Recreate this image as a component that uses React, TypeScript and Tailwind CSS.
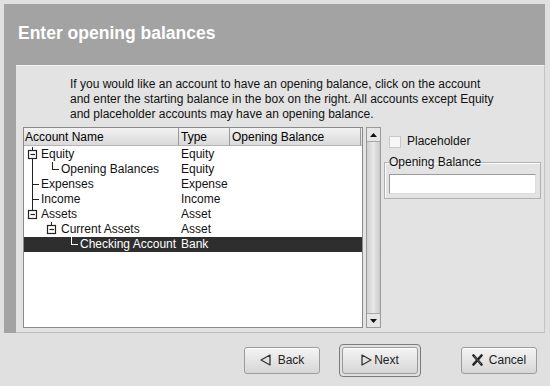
import React from "react";

type Glyph = "root-first" | "leaf-last-1" | "root-mid" | "root-last" | "branch-1" | "leaf-last-2";

type Row = {
  name: string;
  type: string;
  glyph: Glyph;
};

const rows: Row[] = [
  { name: "Equity", type: "Equity", glyph: "root-first" },
  { name: "Opening Balances", type: "Equity", glyph: "leaf-last-1" },
  { name: "Expenses", type: "Expense", glyph: "root-mid" },
  { name: "Income", type: "Income", glyph: "root-mid" },
  { name: "Assets", type: "Asset", glyph: "root-last" },
  { name: "Current Assets", type: "Asset", glyph: "branch-1" },
  { name: "Checking Account", type: "Bank", glyph: "leaf-last-2" },
];

// expander box with a minus, centred on cx
const Expander = ({ cx, color }: { cx: number; color: string }) => (
  <g>
    <rect x={cx - 4} y={3.5} width={8} height={8} fill="none" stroke={color} strokeWidth={1.2} />
    <line x1={cx - 2} y1={7.5} x2={cx + 2.5} y2={7.5} stroke={color} strokeWidth={1.2} />
  </g>
);

const TreeGlyph = ({ kind, selected }: { kind: Glyph; selected: boolean }) => {
  const c = selected ? "#ffffff" : "#222222";
  const width = kind === "leaf-last-2" ? 56 : kind === "leaf-last-1" || kind === "branch-1" ? 37 : 17;
  return (
    <svg width={width} height={15} className="shrink-0">
      {kind === "root-first" && (
        <>
          <line x1={8.5} y1={0} x2={8.5} y2={3.5} stroke={c} />
          <Expander cx={8.5} color={c} />
          <line x1={8.5} y1={11.5} x2={8.5} y2={15} stroke={c} />
        </>
      )}
      {kind === "leaf-last-1" && (
        <>
          <line x1={8.5} y1={0} x2={8.5} y2={15} stroke={c} />
          <line x1={28.5} y1={0} x2={28.5} y2={8} stroke={c} />
          <line x1={28.5} y1={7.5} x2={35} y2={7.5} stroke={c} />
        </>
      )}
      {kind === "root-mid" && (
        <>
          <line x1={8.5} y1={0} x2={8.5} y2={15} stroke={c} />
          <line x1={8.5} y1={7.5} x2={15} y2={7.5} stroke={c} />
        </>
      )}
      {kind === "root-last" && (
        <>
          <line x1={8.5} y1={0} x2={8.5} y2={3.5} stroke={c} />
          <Expander cx={8.5} color={c} />
        </>
      )}
      {kind === "branch-1" && (
        <>
          <line x1={27.5} y1={0} x2={27.5} y2={3.5} stroke={c} />
          <Expander cx={27.5} color={c} />
        </>
      )}
      {kind === "leaf-last-2" && (
        <>
          <line x1={47.5} y1={0} x2={47.5} y2={8} stroke={c} />
          <line x1={47.5} y1={7.5} x2={54} y2={7.5} stroke={c} />
        </>
      )}
    </svg>
  );
};

const BackIcon = () => (
  <svg width="11" height="12" viewBox="0 0 11 12">
    <path d="M1 6 L10 1 L10 11 Z" fill="#e4e4e4" stroke="#333" strokeWidth="1.3" strokeLinejoin="round" />
  </svg>
);

const NextIcon = () => (
  <svg width="11" height="12" viewBox="0 0 11 12">
    <path d="M10 6 L1 1 L1 11 Z" fill="#e4e4e4" stroke="#333" strokeWidth="1.3" strokeLinejoin="round" />
  </svg>
);

const CancelIcon = () => (
  <svg width="11" height="12" viewBox="0 0 11 12">
    <path d="M1.5 1.5 L9.5 10.5 M9.5 1.5 L1.5 10.5" stroke="#222" strokeWidth="2.6" strokeLinecap="round" />
    <path d="M2 2 L9 10" stroke="#777" strokeWidth="0.8" />
  </svg>
);

const Button = ({ icon, label, gap }: { icon: React.ReactNode; label: string; gap: string }) => (
  <div
    className={`flex items-center justify-center ${gap} w-[76px] h-[27px] rounded-[3px] border border-[#9c9c9c] bg-gradient-to-b from-[#f4f4f4] to-[#d6d6d6] text-[12px] text-[#222] shadow-[inset_0_1px_0_#ffffff]`}
  >
    {icon}
    <span>{label}</span>
  </div>
);

export default function App() {
  return (
    <div className="w-[550px] h-[386px] bg-[#e0e0e0] font-['Liberation_Sans',Arial,sans-serif] text-black overflow-hidden">
      {/* druid page frame */}
      <div className="pt-[4px] pl-[4px] pr-[5px]">
        <div className="bg-[#a3a3a3] flex flex-col h-[329px]">
          <div className="h-[61px] flex items-center pl-[14px]">
            <h1 className="text-[17.5px] font-bold text-white leading-none pb-[1px]">Enter opening balances</h1>
          </div>
          <div className="flex-1 flex">
            <div className="w-[12px]" />
            <div className="flex-1 bg-[#e3e3e3] border-t border-t-[#f0f0f0] border-r border-r-[#c4c4c4] border-b border-b-[#bcbcbc] flex flex-col">
              <p className="pl-[54px] pt-[11px] text-[12px] leading-[15px] text-[#111]">
                If you would like an account to have an opening balance, click on the account
                <br />
                and enter the starting balance in the box on the right. All accounts except Equity
                <br />
                and placeholder accounts may have an opening balance.
              </p>

              <div className="flex mt-[5px] pl-[7px]">
                {/* account tree */}
                <div className="w-[340px] h-[201px] border border-[#8a8a8a] bg-white flex flex-col text-[12px]">
                  <div className="flex h-[18px] leading-[18px] bg-gradient-to-b from-[#f2f2f2] to-[#dadada] border-b border-[#b4b4b4]">
                    <div className="w-[155px] pl-[1px] border-r border-[#9a9a9a]">Account Name</div>
                    <div className="w-[51px] pl-[2px] border-r border-[#9a9a9a]">Type</div>
                    <div className="flex-1 pl-[2px] border-r border-[#9a9a9a]">Opening Balance</div>
                    <div className="w-[1px]" />
                  </div>
                  <div className="flex flex-col pt-[1px]">
                    {rows.map((row) => {
                      const selected = row.name === "Checking Account";
                      return (
                        <div
                          key={row.name}
                          className={`flex h-[15px] leading-[15px] ${selected ? "bg-[#2e2e2e] text-white" : "text-[#111]"}`}
                        >
                          <div className="w-[155px] flex items-center">
                            <TreeGlyph kind={row.glyph} selected={selected} />
                            <span className="whitespace-nowrap">{row.name}</span>
                          </div>
                          <div className="w-[51px] pl-[2px]">{row.type}</div>
                          <div className="flex-1" />
                        </div>
                      );
                    })}
                  </div>
                </div>

                {/* scrollbar */}
                <div className="ml-[3px] w-[15px] h-[201px] border border-[#9a9a9a] bg-gradient-to-r from-[#cfcfcf] via-[#e9e9e9] to-[#c8c8c8] flex flex-col justify-between">
                  <div className="h-[14px] flex items-center justify-center bg-[#e6e6e6] border-b border-[#a8a8a8]">
                    <svg width="7" height="4" viewBox="0 0 7 4">
                      <path d="M0 4 L3.5 0 L7 4 Z" fill="#111" />
                    </svg>
                  </div>
                  <div className="h-[14px] flex items-center justify-center bg-[#e6e6e6] border-t border-[#a8a8a8]">
                    <svg width="7" height="4" viewBox="0 0 7 4">
                      <path d="M0 0 L3.5 4 L7 0 Z" fill="#111" />
                    </svg>
                  </div>
                </div>

                {/* right-hand options */}
                <div className="ml-[3px] w-[157px] flex flex-col text-[12px] text-[#111]">
                  <div className="flex items-center mt-[8px] pl-[5px] h-[13px]">
                    <div className="w-[12px] h-[12px] bg-[#f7f7f7] border border-[#c8c8c8]" />
                    <span className="ml-[6px] leading-[15px]">Placeholder</span>
                  </div>
                  <fieldset className="mt-[7px] border border-[#b0b0b0] px-[4px] pb-[4px] shadow-[inset_1px_1px_0_#ffffff]">
                    <legend className="leading-[15px]">Opening Balance</legend>
                    <div className="mt-[4px] h-[20px] bg-white border border-[#9a9a9a] border-b-[#dcdcdc] border-r-[#dcdcdc]" />
                  </fieldset>
                </div>
              </div>
            </div>
          </div>
        </div>
      </div>

      {/* navigation buttons */}
      <div className="flex items-center justify-end pr-[13px] h-[53px] pt-[1px]">
        <Button icon={<BackIcon />} label="Back" gap="gap-[7px]" />
        <div className="ml-[19px] p-[2px] border border-[#7c7c7c] rounded-[4px]">
          <Button icon={<NextIcon />} label="Next" gap="gap-[2px]" />
        </div>
        <div className="ml-[40px]">
          <Button icon={<CancelIcon />} label="Cancel" gap="gap-[6px]" />
        </div>
      </div>
    </div>
  );
}
